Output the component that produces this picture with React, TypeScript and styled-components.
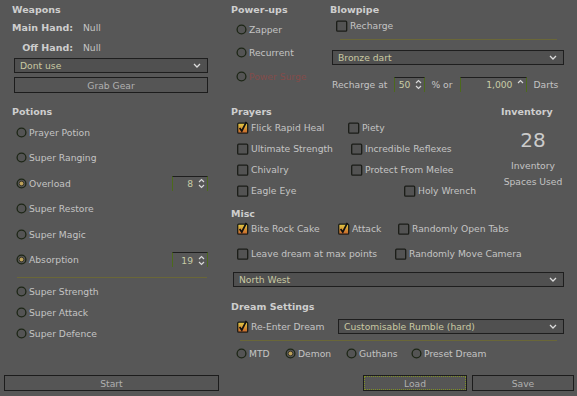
import React from "react";
import styled, { createGlobalStyle } from "styled-components";

const GlobalStyle = createGlobalStyle`
  html, body {
    margin: 0;
    padding: 0;
    background: #575757;
  }
  body {
    font-family: "DejaVu Sans", "Liberation Sans", sans-serif;
  }
`;

const Page = styled.div`
  width: 577px;
  height: 396px;
  box-sizing: border-box;
  background: #575757;
  color: #c4c4c4;
  font-size: 9.2px;
  display: flex;
  flex-direction: column;
  overflow: hidden;
`;

const Main = styled.div`
  display: flex;
  flex: 1;
`;

const LeftCol = styled.div`
  width: 228px;
  flex-shrink: 0;
  box-sizing: border-box;
  padding: 0 20px 0 12px;
  display: flex;
  flex-direction: column;
`;

const RightCol = styled.div`
  flex: 1;
  box-sizing: border-box;
  padding: 0 13px 0 3px;
  display: flex;
  flex-direction: column;
`;

const Title = styled.div<{ $top?: number }>`
  height: 14px;
  line-height: 14px;
  margin-top: ${(p) => p.$top ?? 3}px;
  font-weight: bold;
  font-size: 9.5px;
  color: #cecece;
  white-space: nowrap;
`;

const HandRow = styled.div`
  height: 20px;
  display: flex;
  align-items: center;
  gap: 10px;
`;

const HandLabel = styled.span`
  width: 61px;
  text-align: right;
  font-weight: bold;
  font-size: 9.5px;
  color: #cecece;
`;

const SelectBox = styled.div<{ $top?: number; $left?: number }>`
  height: 15px;
  box-sizing: border-box;
  margin-top: ${(p) => p.$top ?? 0}px;
  margin-left: ${(p) => p.$left ?? 0}px;
  flex: 1;
  border: 1px solid #1e1e1e;
  box-shadow: inset 0 0 0 1px #4f4f4f;
  background: #505050;
  color: #c9c9a2;
  display: flex;
  align-items: center;
  justify-content: space-between;
  padding: 0 6px 0 5px;
  white-space: nowrap;
`;

const Button = styled.div<{ $width?: number; $focus?: boolean }>`
  height: 16px;
  box-sizing: border-box;
  ${(p) => (p.$width ? `width: ${p.$width}px;` : "")}
  border: 1px solid #1c1c1c;
  background: #555555;
  color: #b0b0b0;
  display: flex;
  align-items: center;
  justify-content: center;
  outline: ${(p) => (p.$focus ? "1px dotted #7f8f24" : "none")};
  outline-offset: -2px;
`;

const GearButton = styled(Button)`
  margin: 4px 0 0 2px;
`;

const RadioRow = styled.div<{ $h: number; $pad?: number }>`
  height: ${(p) => p.$h}px;
  display: flex;
  align-items: center;
  padding-left: ${(p) => p.$pad ?? 4}px;
  white-space: nowrap;
`;

const OptionLabel = styled.span<{ $disabled?: boolean }>`
  display: inline-flex;
  align-items: center;
  gap: 2px;
  color: ${(p) => (p.$disabled ? "#834c4a" : "#c4c4c4")};
`;

const Grow = styled.div`
  flex: 1;
`;

const SpinBox = styled.div<{ $width: number }>`
  width: ${(p) => p.$width}px;
  height: 15px;
  box-sizing: border-box;
  border-top: 1px solid #1e1e1e;
  border-left: 1px solid #4c6a1c;
  border-right: 1px solid #4c6a1c;
  display: flex;
  align-items: center;
  justify-content: flex-end;
  gap: 5px;
  padding-right: 2px;
  color: #c8cca6;
`;

const Rule = styled.div<{ $top: number; $left: number; $right: number }>`
  height: 1px;
  background: #6a6738;
  margin: ${(p) => `${p.$top}px ${p.$right}px 0 ${p.$left}px`};
`;

const TopSection = styled.div`
  display: flex;
`;

const PowerUps = styled.div`
  width: 99px;
  display: flex;
  flex-direction: column;
`;

const Blowpipe = styled.div`
  flex: 1;
  display: flex;
  flex-direction: column;
`;

const CheckRow = styled.div<{ $h: number; $top?: number }>`
  height: ${(p) => p.$h}px;
  margin-top: ${(p) => p.$top ?? 0}px;
  display: flex;
  align-items: center;
  padding-left: 6px;
  white-space: nowrap;
`;

const Cell = styled.div<{ $w: number }>`
  width: ${(p) => p.$w}px;
  flex-shrink: 0;
  display: flex;
  align-items: center;
`;

const RechargeRow = styled.div`
  height: 16px;
  margin: 11px 0 0 2px;
  display: flex;
  align-items: center;
  white-space: nowrap;
`;

const Gap = styled.span<{ $w: number }>`
  display: inline-block;
  width: ${(p) => p.$w}px;
`;

const PrayerSection = styled.div`
  display: flex;
`;

const Prayers = styled.div`
  flex: 1;
  display: flex;
  flex-direction: column;
`;

const PrayerGrid = styled.div`
  margin-top: -2.5px;
  display: flex;
  flex-direction: column;
`;

const Inventory = styled.div`
  width: 63px;
  flex-shrink: 0;
  display: flex;
  flex-direction: column;
`;

const InvCentre = styled.div`
  display: flex;
  flex-direction: column;
  align-items: center;
  margin-left: 1px;
`;

const InvCount = styled.div`
  margin-top: 9px;
  font-size: 20px;
  line-height: 24px;
  color: #cbcbcb;
`;

const InvText = styled.div<{ $top?: number }>`
  margin-top: ${(p) => p.$top ?? 0}px;
  line-height: 16px;
  white-space: nowrap;
`;

const Footer = styled.div`
  height: 17px;
  padding: 0 3px 4px 4px;
  display: flex;
  gap: 5px;
`;

const Chevron = () => (
  <svg width="8" height="5" viewBox="0 0 8 5">
    <polyline points="1,1 4,4 7,1" fill="none" stroke="#dcdcdc" strokeWidth="1.3" />
  </svg>
);

const SpinArrows = ({ onlyUp }: { onlyUp?: boolean }) => (
  <svg width="7" height="11" viewBox="0 0 7 11">
    <polyline points="1,4 3.5,1.5 6,4" fill="none" stroke="#d8d8d8" strokeWidth="1.2" />
    {!onlyUp && (
      <polyline points="1,7 3.5,9.5 6,7" fill="none" stroke="#d8d8d8" strokeWidth="1.2" />
    )}
  </svg>
);

const Radio = ({ on }: { on?: boolean }) => (
  <svg width="11" height="11" viewBox="0 0 11 11">
    <circle cx="5.5" cy="5.5" r="4.4" fill="#545454" stroke="#1d2616" strokeWidth="1.3" />
    {on && <circle cx="5.5" cy="5.5" r="2.3" fill="#bea25a" stroke="#2c2a1e" strokeWidth="0.8" />}
  </svg>
);

const Check = ({ on }: { on?: boolean }) => (
  <svg width="12" height="13" viewBox="0 0 12 13">
    <defs>
      <linearGradient id="ck" x1="0" y1="0" x2="0" y2="1">
        <stop offset="0" stopColor="#e2cc44" />
        <stop offset="1" stopColor="#c8622a" />
      </linearGradient>
    </defs>
    <rect
      x="0.7"
      y="2.2"
      width="10"
      height="10"
      rx="1"
      fill={on ? "url(#ck)" : "#535353"}
      stroke="#1b1d18"
      strokeWidth="1.3"
    />
    {on && (
      <polyline
        points="2.6,7 4.8,10 9.4,0.8"
        fill="none"
        stroke="#111"
        strokeWidth="1.7"
      />
    )}
  </svg>
);

const RadioOpt = ({ label, on, disabled }: { label: string; on?: boolean; disabled?: boolean }) => (
  <OptionLabel $disabled={disabled}>
    <Radio on={on} />
    {label}
  </OptionLabel>
);

const CheckOpt = ({ label, on }: { label: string; on?: boolean }) => (
  <OptionLabel>
    <Check on={on} />
    {label}
  </OptionLabel>
);

const Spinner = ({ value, width, onlyUp }: { value: string; width: number; onlyUp?: boolean }) => (
  <SpinBox $width={width}>
    {value}
    <SpinArrows onlyUp={onlyUp} />
  </SpinBox>
);

const potionsTop = [
  { name: "Prayer Potion" },
  { name: "Super Ranging" },
  { name: "Overload", on: true, amount: "8" },
  { name: "Super Restore" },
  { name: "Super Magic" },
  { name: "Absorption", on: true, amount: "19" },
];

const potionsBottom = ["Super Strength", "Super Attack", "Super Defence"];

const prayerRows = [
  { a: "Flick Rapid Heal", aOn: true, w: 111, b: "Piety" },
  { a: "Ultimate Strength", w: 114, b: "Incredible Reflexes" },
  { a: "Chivalry", w: 114, b: "Protect From Melee" },
  { a: "Eagle Eye", w: 167, b: "Holy Wrench" },
];

const App = () => {
  return (
    <Page>
      <GlobalStyle />
      <Main>
        <LeftCol>
          <Title>Weapons</Title>
          <HandRow>
            <HandLabel>Main Hand:</HandLabel>
            <span>Null</span>
          </HandRow>
          <HandRow>
            <HandLabel>Off Hand:</HandLabel>
            <span>Null</span>
          </HandRow>
          <SelectBox $top={1} $left={2} style={{ flex: "none" }}>
            Dont use
            <Chevron />
          </SelectBox>
          <GearButton>Grab Gear</GearButton>

          <Title $top={12}>Potions</Title>
          <div style={{ height: 0.25 }} />
          {potionsTop.map((p) => (
            <RadioRow key={p.name} $h={25.5}>
              <RadioOpt label={p.name} on={p.on} />
              <Grow />
              {p.amount && <Spinner value={p.amount} width={36} />}
            </RadioRow>
          ))}
          <Rule $top={5} $left={5} $right={1} />
          <div style={{ height: 2.5 }} />
          {potionsBottom.map((name) => (
            <RadioRow key={name} $h={21}>
              <RadioOpt label={name} />
            </RadioRow>
          ))}
        </LeftCol>

        <RightCol>
          <TopSection>
            <PowerUps>
              <Title>Power-ups</Title>
              <div style={{ height: 0.25 }} />
              <RadioRow $h={23.5} $pad={5}>
                <RadioOpt label="Zapper" />
              </RadioRow>
              <RadioRow $h={23.5} $pad={5}>
                <RadioOpt label="Recurrent" />
              </RadioRow>
              <RadioRow $h={23.5} $pad={5}>
                <RadioOpt label="Power Surge" disabled />
              </RadioRow>
            </PowerUps>
            <Blowpipe>
              <Title>Blowpipe</Title>
              <CheckRow $h={17}>
                <CheckOpt label="Recharge" />
              </CheckRow>
              <Rule $top={5} $left={10} $right={7} />
              <SelectBox $top={10} $left={2} style={{ flex: "none" }}>
                Bronze dart
                <Chevron />
              </SelectBox>
              <RechargeRow>
                Recharge at
                <Gap $w={7} />
                <Spinner value="50" width={31} />
                <Gap $w={6} />
                % or
                <Gap $w={8} />
                <Spinner value="1,000" width={67} onlyUp />
                <Gap $w={6} />
                Darts
              </RechargeRow>
            </Blowpipe>
          </TopSection>

          <PrayerSection>
            <Prayers>
              <Title $top={13}>Prayers</Title>
              <PrayerGrid>
                {prayerRows.map((r) => (
                  <CheckRow key={r.a} $h={21}>
                    <Cell $w={r.w}>
                      <CheckOpt label={r.a} on={r.aOn} />
                    </Cell>
                    <CheckOpt label={r.b} />
                  </CheckRow>
                ))}
              </PrayerGrid>
            </Prayers>
            <Inventory>
              <Title $top={13}>Inventory</Title>
              <InvCentre>
                <InvCount>28</InvCount>
                <InvText $top={6}>Inventory</InvText>
                <InvText>Spaces Used</InvText>
              </InvCentre>
            </Inventory>
          </PrayerSection>

          <Title $top={6}>Misc</Title>
          <CheckRow $h={16}>
            <Cell $w={101}>
              <CheckOpt label="Bite Rock Cake" on />
            </Cell>
            <Cell $w={60}>
              <CheckOpt label="Attack" on />
            </Cell>
            <CheckOpt label="Randomly Open Tabs" />
          </CheckRow>
          <CheckRow $h={16} $top={9}>
            <Cell $w={158}>
              <CheckOpt label="Leave dream at max points" />
            </Cell>
            <CheckOpt label="Randomly Move Camera" />
          </CheckRow>
          <SelectBox $top={10} $left={2} style={{ flex: "none" }}>
            North West
            <Chevron />
          </SelectBox>

          <Title $top={13}>Dream Settings</Title>
          <CheckRow $h={16} $top={5}>
            <Cell $w={101}>
              <CheckOpt label="Re-Enter Dream" on />
            </Cell>
            <SelectBox>
              Customisable Rumble (hard)
              <Chevron />
            </SelectBox>
          </CheckRow>
          <Rule $top={5} $left={9} $right={7} />
          <RadioRow $h={14} $pad={5} style={{ marginTop: 6 }}>
            <Cell $w={49}>
              <RadioOpt label="MTD" />
            </Cell>
            <Cell $w={61}>
              <RadioOpt label="Demon" on />
            </Cell>
            <Cell $w={65}>
              <RadioOpt label="Guthans" />
            </Cell>
            <RadioOpt label="Preset Dream" />
          </RadioRow>
        </RightCol>
      </Main>

      <Footer>
        <Button $width={215}>Start</Button>
        <Grow />
        <Button $width={104} $focus>
          Load
        </Button>
        <Button $width={102}>Save</Button>
      </Footer>
    </Page>
  );
};

export default App;
